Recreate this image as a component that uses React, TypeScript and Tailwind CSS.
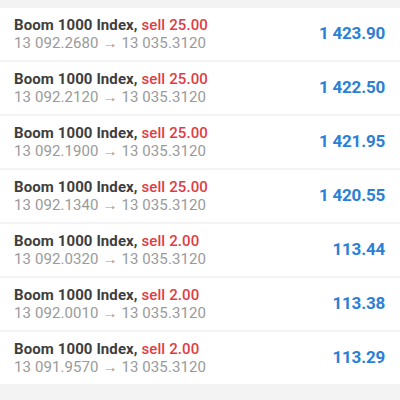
import React from "react";

const rows = [
  { lot: "25.00", open: "13 092.2680", close: "13 035.3120", profit: "1 423.90" },
  { lot: "25.00", open: "13 092.2120", close: "13 035.3120", profit: "1 422.50" },
  { lot: "25.00", open: "13 092.1900", close: "13 035.3120", profit: "1 421.95" },
  { lot: "25.00", open: "13 092.1340", close: "13 035.3120", profit: "1 420.55" },
  { lot: "2.00", open: "13 092.0320", close: "13 035.3120", profit: "113.44" },
  { lot: "2.00", open: "13 092.0010", close: "13 035.3120", profit: "113.38" },
  { lot: "2.00", open: "13 091.9570", close: "13 035.3120", profit: "113.29" },
];

export default function App() {
  return (
    <div
      className="w-[400px] h-[400px] overflow-hidden bg-[#f3f3f3] flex flex-col gap-[2px] pt-[8px]"
      style={{ fontFamily: "Roboto, 'Liberation Sans', sans-serif" }}
    >
      {rows.map((r, i) => (
        <div key={i} className="h-[52px] shrink-0 bg-white flex items-center justify-between pl-[14px] pr-[15px]">
          <div className="flex flex-col leading-[18px]">
            <div className="text-[15px] whitespace-nowrap tracking-[0.1px]">
              <span className="font-bold text-[#3e3e3e]">Boom 1000 Index, </span>
              <span className="text-[#e03c44] font-medium">sell {r.lot}</span>
            </div>
            <div className="text-[15px] text-[#9a9a9a] whitespace-nowrap tracking-[0.1px]">
              {r.open} → {r.close}
            </div>
          </div>
          <div className="text-[17px] font-bold text-[#2c7fd6] tracking-[-0.2px]">
            {r.profit}
          </div>
        </div>
      ))}
    </div>
  );
}
